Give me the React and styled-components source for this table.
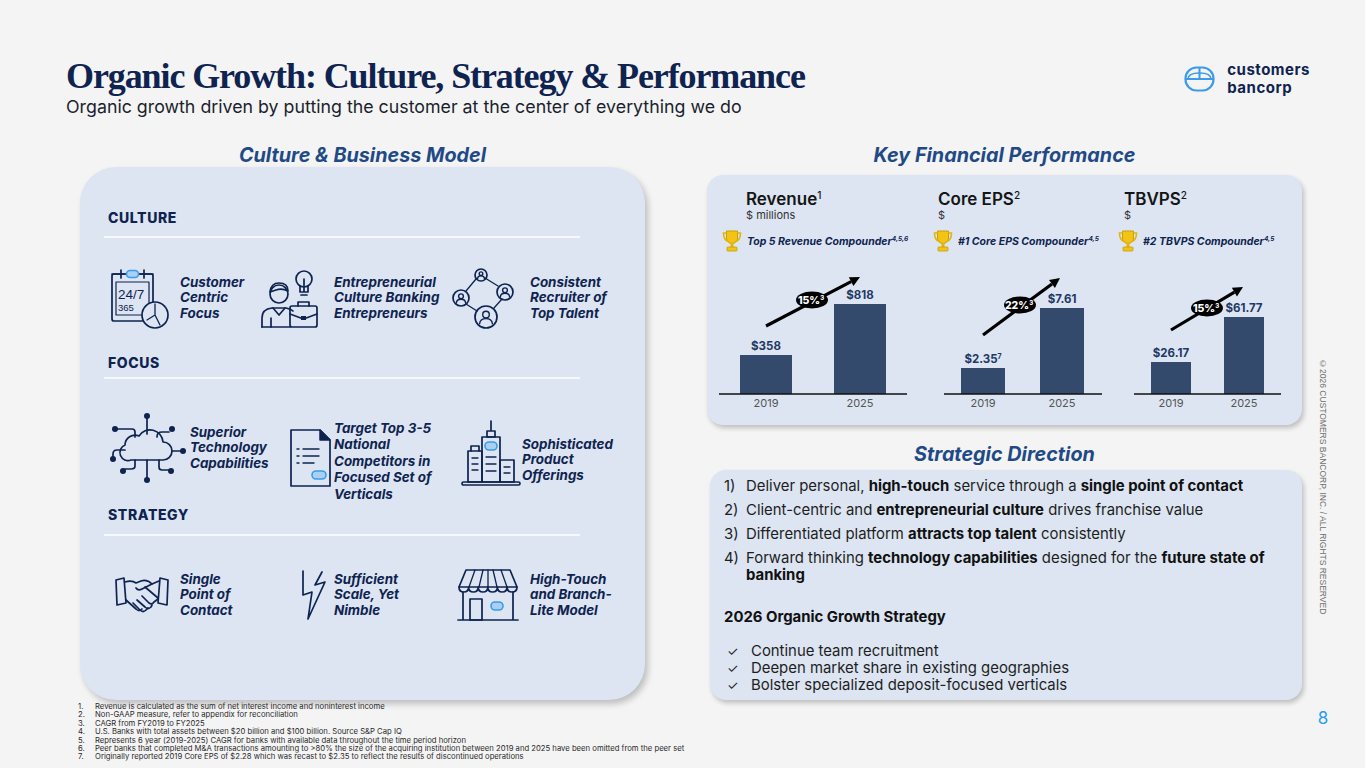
import styled, { createGlobalStyle } from 'styled-components'

const NAVY = '#0f2350'
const BLUE = '#3d9be9'
const BLUE_L = '#a9d0f2'
const PANEL = '#dce5f1'
const BAR = '#344a6c'
const SANS = 'Inter, "Noto Sans", "Liberation Sans", sans-serif'

const Global = createGlobalStyle`
    html, body {
        margin: 0;
        padding: 0;
        background: #f4f4f4;
    }
    body {
        font-family: ${SANS};
        color: #1e1e1e;
    }
`

const Page = styled.div`
    width: 1365px;
    height: 768px;
    overflow: hidden;
    background: #f4f4f4;
`

const Header = styled.header`
    display: flex;
    justify-content: space-between;
    align-items: flex-start;
    padding: 56px 55px 0 66px;
`

const Title = styled.h1`
    margin: 0;
    font-family: "Liberation Serif", "DejaVu Serif", serif;
    font-weight: 700;
    font-size: 36px;
    line-height: 40px;
    letter-spacing: -1.1px;
    color: ${NAVY};
`

const Subtitle = styled.p`
    margin: 0;
    font-size: 17.8px;
    line-height: 22px;
    color: #1b1f2e;
`

const Logo = styled.div`
    display: flex;
    align-items: center;
    gap: 12px;
    margin-top: 5px;
`

const LogoText = styled.div`
    font-size: 15px;
    font-weight: 700;
    line-height: 18px;
    color: ${NAVY};
    letter-spacing: 0.5px;
`

const Main = styled.main`
    display: grid;
    grid-template-columns: 565px 657px 42px;
    height: 623px;
    margin-top: 27px;
    padding-left: 80px;
`

const Column = styled.section`
    display: flex;
    flex-direction: column;
    padding-left: ${({ $pl }) => $pl || 0}px;
`

const SectionTitle = styled.h2`
    margin: ${({ $mt }) => $mt || 0}px 0 0;
    text-align: center;
    font-size: 19.8px;
    line-height: 20px;
    font-weight: 700;
    font-style: italic;
    color: #1f4a87;
`

const CulturePanel = styled.div`
    margin-top: 2px;
    height: 533px;
    box-sizing: border-box;
    padding: 43px 65px 0 24px;
    background: ${PANEL};
    border-radius: 36px;
    box-shadow: 3px 4px 6px rgba(0, 0, 0, 0.22);
`

const GroupLabel = styled.div`
    margin-top: ${({ $mt }) => $mt}px;
    padding-left: 4px;
    font-size: 14px;
    line-height: 16px;
    font-weight: 800;
    letter-spacing: 0.6px;
    color: ${NAVY};
`

const Divider = styled.div`
    margin-top: ${({ $mt }) => $mt}px;
    height: 2px;
    background: rgba(255, 255, 255, 0.75);
`

const IconRow = styled.div`
    display: grid;
    grid-template-columns: 154px 192px 1fr;
    grid-template-rows: ${({ $h }) => $h}px;
    align-items: center;
    margin-top: ${({ $mt }) => $mt}px;
`

// a top margin of 2n on a centred item moves it down by n
const Item = styled.div`
    display: flex;
    align-items: center;
    margin-top: ${({ $dy }) => ($dy || 0) * 2}px;
`

const IconBox = styled.div`
    flex: 0 0 ${({ $w }) => $w || 76}px;
    display: flex;
    align-items: center;
    padding-left: ${({ $ml }) => $ml || 0}px;
    margin-top: ${({ $up }) => -($up || 0) * 2}px;
    box-sizing: border-box;
`

const ItemText = styled.div`
    font-size: 13.4px;
    line-height: ${({ $lh }) => $lh || 15.5}px;
    font-weight: 700;
    font-style: italic;
    color: ${NAVY};
    white-space: nowrap;
`

const Footnotes = styled.ol`
    margin: 3px 0 0 -2px;
    padding: 0;
    list-style: none;
    counter-reset: fn;
`

const Footnote = styled.li`
    counter-increment: fn;
    display: flex;
    font-size: 7.7px;
    line-height: 8.4px;
    color: #2a2a2a;
    white-space: nowrap;

    &::before {
        content: counter(fn) ".";
        flex: 0 0 17px;
    }
`

const FinPanel = styled.div`
    margin-top: 10px;
    width: 595px;
    height: 250px;
    box-sizing: border-box;
    padding-top: 14px;
    display: grid;
    grid-template-columns: 218px 187px 1fr;
    background: ${PANEL};
    border-radius: 16px;
    box-shadow: 2px 3px 5px rgba(0, 0, 0, 0.22);
`

const Chart = styled.div`
    display: flex;
    flex-direction: column;
`

const ChartTitle = styled.div`
    padding-left: ${({ $pl }) => $pl}px;
    font-size: 17px;
    line-height: 20px;
    font-weight: 600;
    color: #151515;

    sup {
        font-size: 10px;
        font-weight: 500;
        vertical-align: 6px;
        line-height: 0;
    }
`

const ChartUnit = styled.div`
    padding-left: ${({ $pl }) => $pl}px;
    font-size: 11px;
    line-height: 13px;
    color: #333;
`

const Award = styled.div`
    display: flex;
    align-items: center;
    gap: 5px;
    height: 24px;
    margin-top: 7px;
    padding-left: ${({ $pl }) => $pl}px;
    font-size: 10.5px;
    font-weight: 700;
    font-style: italic;
    color: ${NAVY};
    white-space: nowrap;

    sup {
        font-size: 6.5px;
        vertical-align: 4px;
        line-height: 0;
    }
`

const Plot = styled.svg`
    display: block;
    margin-top: 12px;
`

const StratPanel = styled.div`
    margin-top: 6px;
    width: 592px;
    margin-left: 3px;
    height: 230px;
    box-sizing: border-box;
    padding: 8px 14px 0;
    background: ${PANEL};
    border-radius: 16px;
    box-shadow: 2px 3px 5px rgba(0, 0, 0, 0.22);
    font-size: 14.9px;
    line-height: 17px;
    color: #1e1e1e;

    b {
        font-weight: 700;
        color: #111;
    }
`

const Point = styled.div`
    display: flex;
    margin-top: ${({ $first }) => ($first ? 0 : 7)}px;
`

const PointNum = styled.span`
    flex: 0 0 22px;
`

const PointText = styled.div`
    flex: 1;
`

const StrategyHead = styled.div`
    margin-top: 25px;
    font-weight: 700;
    color: #111;
`

const Checks = styled.ul`
    margin: 17px 0 0;
    padding: 0;
    list-style: none;
`

const Check = styled.li`
    display: flex;

    &::before {
        content: "✓";
        flex: 0 0 27px;
        padding-left: 3px;
        box-sizing: border-box;
        font-size: 13px;
    }
`

const Side = styled.aside`
    display: flex;
    flex-direction: column;
    align-items: center;
    padding-top: 214px;
`

const Copyright = styled.div`
    writing-mode: vertical-rl;
    font-family: "Liberation Sans", Arial, sans-serif;
    font-size: 8.5px;
    color: #6f6f6f;
    white-space: nowrap;
`

const PageNum = styled.div`
    margin-top: auto;
    margin-bottom: 40px;
    font-size: 17px;
    line-height: 20px;
    color: #2b9de9;
`

/* ---------- drawings ---------- */

const stroke = { fill: 'none', stroke: NAVY, strokeWidth: 1.7, strokeLinecap: 'round', strokeLinejoin: 'round' }
const pill = { fill: BLUE_L, stroke: BLUE, strokeWidth: 1.6 }

const LogoMark = () => (
    <svg width="31" height="26" viewBox="0 0 31 26">
        <rect x="1.5" y="1.5" width="28" height="23" rx="11" fill="none" stroke={BLUE} strokeWidth="2.2" />
        <path d="M1.5 13 H29.5" stroke={BLUE} strokeWidth="2" />
        <path d="M15.5 1.5 V13" stroke={BLUE} strokeWidth="2" />
        <path d="M4 13 Q4 7 15.5 7 Q27 7 27 13" fill="none" stroke={BLUE} strokeWidth="1.6" />
    </svg>
)

const Person = ({ cx, cy, r }) => (
    <g {...stroke} strokeWidth="1.4">
        <circle cx={cx} cy={cy - r * 0.22} r={r * 0.3} />
        <path d={`M${cx - r * 0.58} ${cy + r * 0.62} Q${cx - r * 0.55} ${cy + r * 0.15} ${cx} ${cy + r * 0.15} Q${cx + r * 0.55} ${cy + r * 0.15} ${cx + r * 0.58} ${cy + r * 0.62}`} />
    </g>
)

const CalendarIcon = () => (
    <svg width="60" height="62" viewBox="0 0 60 62">
        <rect x="2" y="7" width="41" height="47" rx="2" {...stroke} />
        <rect x="6" y="15" width="33" height="33" {...stroke} strokeWidth="1.2" />
        <path d="M11 3 V11 M34 3 V11 M2 7 H43" {...stroke} />
        <rect x="16.5" y="3.5" width="12" height="7" rx="3.5" {...pill} />
        <text x="8" y="32" fontSize="13.5" fontFamily="Liberation Sans, sans-serif" fill={NAVY}>24/7</text>
        <text x="8" y="44" fontSize="9.5" fontFamily="Liberation Sans, sans-serif" fill={NAVY}>365</text>
        <circle cx="45" cy="48" r="13" fill={PANEL} stroke={NAVY} strokeWidth="1.7" />
        <path d="M45 48 V37 M45 48 L37 53 M45 48 L50 58" {...stroke} strokeWidth="1.3" />
    </svg>
)

const EntrepreneurIcon = () => (
    <svg width="62" height="60" viewBox="0 0 62 60">
        <circle cx="19" cy="26" r="9" {...stroke} />
        <path d="M10 24 Q11 15 19 15 Q28 15 28 23 Q22 20 16 22 Q13 23 10 24" {...stroke} />
        <path d="M2 59 V50 Q2 41 12 40 H26 Q31 41 33 43" {...stroke} />
        <path d="M13 40 L19 47 L25 40 M11 50 V59" {...stroke} />
        <path d="M2 59 H30" {...stroke} />
        <circle cx="44" cy="11" r="8" {...stroke} />
        <path d="M40 18 V24 H48 V18 M44 11 V24 M41 27 H47" {...stroke} />
        <rect x="30" y="38" width="27" height="21" rx="2" {...stroke} />
        <path d="M38 38 V34 H49 V38 M30 46 L43.5 51 L57 46" {...stroke} />
        <rect x="41" y="48" width="5" height="4" fill={NAVY} />
    </svg>
)

const NetworkIcon = () => (
    <svg width="62" height="62" viewBox="0 0 62 62">
        <path d="M24 12 L14 24 M33 11 L46 19 M14 37 L25 44 M50 32 L42 41" {...stroke} strokeWidth="1.3" />
        <circle cx="29" cy="8" r="6" {...stroke} />
        <circle cx="9" cy="31" r="8" {...stroke} />
        <circle cx="53" cy="25" r="8" {...stroke} />
        <circle cx="34" cy="50" r="11" {...stroke} />
        <Person cx={29} cy={8} r={6} />
        <Person cx={9} cy={31} r={8} />
        <Person cx={53} cy={25} r={8} />
        <Person cx={34} cy={50} r={11} />
    </svg>
)

const CloudIcon = () => (
    <svg width="80" height="76" viewBox="0 0 80 76">
        <path d="M24 50 H56 A9 9 0 0 0 56 32 A13 13 0 0 0 32 26 A10 10 0 0 0 18 35 A8 8 0 0 0 24 50 Z" {...stroke} />
        <g {...stroke}>
            <path d="M40 24 V7" />
            <path d="M28 27 V22 Q28 19 25 19 H10" />
            <path d="M50 27 Q50 22 55 22 H62" />
            <path d="M18 40 H10 Q6 40 6 44 V47" />
            <path d="M65 41 H74" />
            <path d="M40 50 V68" />
            <path d="M28 50 V56 Q28 59 24 59 H18" />
            <path d="M52 50 V57 Q52 60 55 60 H62" />
        </g>
        <g fill={NAVY}>
            <circle cx="40" cy="6" r="3" />
            <circle cx="8" cy="19" r="3" />
            <circle cx="65" cy="19" r="3" />
            <circle cx="6" cy="49" r="3" />
            <circle cx="76" cy="41" r="3" />
            <circle cx="40" cy="70" r="3" />
            <circle cx="16" cy="61" r="3" />
            <circle cx="64" cy="61" r="3" />
        </g>
    </svg>
)

const DocumentIcon = () => (
    <svg width="44" height="60" viewBox="0 0 44 60">
        <path d="M3 2 H32 L42 12 V58 H3 Z" {...stroke} />
        <path d="M32 2 L42 12 H32 Z" fill={NAVY} stroke={NAVY} strokeWidth="1.5" strokeLinejoin="round" />
        <path d="M9 21 H11 M15 21 H31 M9 28 H11 M15 28 H31 M9 35 H11 M15 35 H26" {...stroke} strokeWidth="1.4" />
        <rect x="24" y="43" width="14" height="8" rx="4" {...pill} />
    </svg>
)

const BuildingIcon = () => (
    <svg width="62" height="66" viewBox="0 0 62 66">
        <path d="M31 1 V11 M27 11 H35 V17 H27 Z" {...stroke} />
        <rect x="22" y="17" width="18" height="45" {...stroke} />
        <rect x="8" y="31" width="14" height="31" {...stroke} />
        <path d="M11 31 V26 H19 V31" {...stroke} />
        <rect x="40" y="40" width="14" height="22" {...stroke} />
        <rect x="2" y="62" width="58" height="3" rx="1.5" {...stroke} />
        <rect x="25" y="22" width="12" height="8" rx="4" {...pill} />
        <path d="M12 38 H18 M12 44 H18 M12 50 H18 M26 37 H36 M26 44 H36 M26 51 H36 M44 47 H50 M44 53 H50" {...stroke} strokeWidth="1.3" />
    </svg>
)

const HandshakeIcon = () => (
    <svg width="56" height="44" viewBox="0 0 56 44">
        <path d="M2 7 L10 5 L12 30 L3 32 Z" {...stroke} />
        <path d="M46 5 L54 7 L53 32 L44 30 Z" {...stroke} />
        <path d="M11 9 Q18 7 22 10 L27 8 Q33 6 38 11 L45 8" {...stroke} />
        <path d="M38 11 L28 16 Q24 18 22 15" {...stroke} />
        <path d="M12 27 L22 36 Q25 39 28 36" {...stroke} />
        <path d="M19 30 L26 37 Q29 40 32 37 L34 35" {...stroke} />
        <path d="M23 27 L31 34 Q34 37 37 34 L38 32" {...stroke} />
        <path d="M28 23 L35 30 Q38 32 40 29 L44 26" {...stroke} />
        <path d="M31 14 L44 25" {...stroke} />
    </svg>
)

const BoltIcon = () => (
    <svg width="28" height="52" viewBox="0 0 28 52">
        <path d="M3 2 L3 26 L12 23 L8 50 L25 13 L15 16 L22 3" {...stroke} />
    </svg>
)

const StoreIcon = () => (
    <svg width="62" height="56" viewBox="0 0 62 56">
        <path d="M9 3 H53 L60 20 H2 Z" {...stroke} />
        <path d="M2 20 Q2 25 6.8 25 Q11.6 25 11.6 20 Q11.6 25 16.4 25 Q21.2 25 21.2 20 Q21.2 25 26 25 Q30.8 25 30.8 20 Q30.8 25 35.6 25 Q40.4 25 40.4 20 Q40.4 25 45.2 25 Q50 25 50 20 Q50 25 55 25 Q60 25 60 20" {...stroke} />
        <path d="M18 3 L12 20 M26 3 L22 20 M31 3 V20 M36 3 L40 20 M44 3 L50 20" {...stroke} strokeWidth="1.3" />
        <path d="M6 25 V53 M56 25 V53 M1 53 H61" {...stroke} />
        <rect x="13" y="32" width="12" height="21" {...stroke} />
        <rect x="34" y="35" width="12" height="8" rx="4" {...pill} />
    </svg>
)

const Trophy = () => (
    <svg width="20" height="24" viewBox="0 0 20 24">
        <path d="M4.5 2 H15.5 V9 A5.5 5.5 0 0 1 4.5 9 Z" fill="#f3c414" stroke="#c99d05" strokeWidth="1" />
        <path d="M4.5 4 H1.5 Q1.5 11 6 12.5 M15.5 4 H18.5 Q18.5 11 14 12.5" fill="none" stroke="#e2b40c" strokeWidth="1.6" />
        <rect x="8.5" y="14" width="3" height="4" fill="#e2b40c" />
        <rect x="5" y="18" width="10" height="4" rx="0.8" fill="#f3c414" stroke="#c99d05" strokeWidth="0.8" />
    </svg>
)

/* ---------- data ---------- */

// dy moves a whole item down, up pulls its icon back up (px)
const rows = [
    {
        label: 'CULTURE', labelTop: 0, divTop: 10, rowTop: 30, h: 60,
        items: [
            { icon: <CalendarIcon />, ml: 6, text: ['Customer', 'Centric', 'Focus'] },
            { icon: <EntrepreneurIcon />, ml: 2, text: ['Entrepreneurial', 'Culture Banking', 'Entrepreneurs'] },
            { icon: <NetworkIcon />, ml: 2, w: 80, text: ['Consistent', 'Recruiter of', 'Top Talent'] },
        ],
    },
    {
        label: 'FOCUS', labelTop: 27, divTop: 6, rowTop: 31, h: 76,
        items: [
            { icon: <CloudIcon />, ml: 3, w: 86, text: ['Superior', 'Technology', 'Capabilities'] },
            { icon: <DocumentIcon />, ml: 30, dy: 13, up: 3, lh: 16.5, text: ['Target Top 3-5', 'National', 'Competitors in', 'Focused Set of', 'Verticals'] },
            { icon: <BuildingIcon />, ml: 10, w: 72, dy: 12, up: 7, text: ['Sophisticated', 'Product', 'Offerings'] },
        ],
    },
    {
        label: 'STRATEGY', labelTop: 21, divTop: 11, rowTop: 28, h: 62,
        items: [
            { icon: <HandshakeIcon />, ml: 10, text: ['Single', 'Point of', 'Contact'] },
            { icon: <BoltIcon />, ml: 42, text: ['Sufficient', 'Scale, Yet', 'Nimble'] },
            { icon: <StoreIcon />, ml: 7, w: 80, text: ['High-Touch', 'and Branch-', 'Lite Model'] },
        ],
    },
]

const charts = [
    {
        title: 'Revenue', sup: '1', unit: '$ millions', award: 'Top 5 Revenue Compounder', awardSup: '4,5,6',
        titlePad: 39, trophyPad: 15, width: 218, axis: [12, 200],
        bars: [
            { x: 33, w: 52, h: 39, label: '$358', year: '2019' },
            { x: 127, w: 52, h: 90, label: '$818', year: '2025' },
        ],
        arrow: [59, 61, 153, 12], pill: [105, 35, '15%'],
    },
    {
        title: 'Core EPS', sup: '2', unit: '$', award: '#1 Core EPS Compounder', awardSup: '4,5',
        titlePad: 13, trophyPad: 8, width: 187, axis: [19, 177],
        bars: [
            { x: 36, w: 44, h: 26, label: '$2.35', labelSup: '7', year: '2019' },
            { x: 115, w: 44, h: 86, label: '$7.61', year: '2025' },
        ],
        arrow: [58, 70, 135, 13], pill: [95, 40, '22%'],
    },
    {
        title: 'TBVPS', sup: '2', unit: '$', award: '#2 TBVPS Compounder', awardSup: '4,5',
        titlePad: 12, trophyPad: 6, width: 190, axis: [22, 169],
        bars: [
            { x: 39, w: 40, h: 32, label: '$26.17', year: '2019' },
            { x: 112, w: 40, h: 77, label: '$61.77', year: '2025' },
        ],
        arrow: [59, 65, 131, 22], pill: [95, 43, '15%'],
    },
]

const footnotes = [
    'Revenue is calculated as the sum of net interest income and noninterest income',
    'Non-GAAP measure, refer to appendix for reconciliation',
    'CAGR from FY2019 to FY2025',
    'U.S. Banks with total assets between $20 billion and $100 billion. Source S&P Cap IQ',
    'Represents 6 year (2019-2025) CAGR for banks with available data throughout the time period horizon',
    'Peer banks that completed M&A transactions amounting to >80% the size of the acquiring institution between 2019 and 2025 have been omitted from the peer set',
    'Originally reported 2019 Core EPS of $2.28 which was recast to $2.35 to reflect the results of discontinued operations',
]

/* ---------- parts ---------- */

const BASE = 129

const Arrow = ({ line }) => {
    const [x1, y1, x2, y2] = line
    const len = Math.hypot(x2 - x1, y2 - y1)
    const ux = (x2 - x1) / len
    const uy = (y2 - y1) / len
    const bx = x2 - ux * 10
    const by = y2 - uy * 10
    const head = `${x2},${y2} ${bx - uy * 5},${by + ux * 5} ${bx + uy * 5},${by - ux * 5}`
    return (
        <g>
            <line x1={x1} y1={y1} x2={bx} y2={by} stroke="#000" strokeWidth="3.2" />
            <polygon points={head} fill="#000" />
        </g>
    )
}

const ChartBlock = ({ c }) => (
    <Chart>
        <ChartTitle $pl={c.titlePad}>{c.title}<sup>{c.sup}</sup></ChartTitle>
        <ChartUnit $pl={c.titlePad}>{c.unit}</ChartUnit>
        <Award $pl={c.trophyPad}>
            <Trophy />
            <span>{c.award}<sup>{c.awardSup}</sup></span>
        </Award>
        <Plot width={c.width} height="150" viewBox={`0 0 ${c.width} 150`} fontFamily={SANS}>
            {c.bars.map((b) => (
                <g key={b.year}>
                    <rect x={b.x} y={BASE - b.h} width={b.w} height={b.h} fill={BAR} />
                    <text x={b.x + b.w / 2} y={BASE - b.h - 5} textAnchor="middle" fontSize="11.5" fontWeight="700" fill="#1f3966">
                        {b.label}
                        {b.labelSup && <tspan fontSize="7" dy="-4">{b.labelSup}</tspan>}
                    </text>
                    <text x={b.x + b.w / 2} y={BASE + 13} textAnchor="middle" fontSize="11" fill="#555">{b.year}</text>
                </g>
            ))}
            <line x1={c.axis[0]} y1={BASE} x2={c.axis[1]} y2={BASE} stroke="#111" strokeWidth="1.4" />
            <Arrow line={c.arrow} />
            <ellipse cx={c.pill[0]} cy={c.pill[1]} rx="16" ry="8.5" fill="#000" />
            <text x={c.pill[0] - 1} y={c.pill[1] + 3.8} textAnchor="middle" fontSize="10.5" fontWeight="800" fill="#fff">
                {c.pill[2]}<tspan fontSize="6" dy="-4">3</tspan>
            </text>
        </Plot>
    </Chart>
)

const App = () => {
    return (
        <Page>
            <Global />
            <Header>
                <div>
                    <Title>Organic Growth: Culture, Strategy &amp; Performance</Title>
                    <Subtitle>Organic growth driven by putting the customer at the center of everything we do</Subtitle>
                </div>
                <Logo>
                    <LogoMark />
                    <LogoText>
                        <div>customers</div>
                        <div>bancorp</div>
                    </LogoText>
                </Logo>
            </Header>

            <Main>
                <Column>
                    <SectionTitle>Culture &amp; Business Model</SectionTitle>
                    <CulturePanel>
                        {rows.map((r) => (
                            <div key={r.label}>
                                <GroupLabel $mt={r.labelTop}>{r.label}</GroupLabel>
                                <Divider $mt={r.divTop} />
                                <IconRow $mt={r.rowTop} $h={r.h}>
                                    {r.items.map((it) => (
                                        <Item key={it.text.join(' ')} $dy={it.dy}>
                                            <IconBox $ml={it.ml} $w={it.w} $up={it.up}>{it.icon}</IconBox>
                                            <ItemText $lh={it.lh}>
                                                {it.text.map((t) => <div key={t}>{t}</div>)}
                                            </ItemText>
                                        </Item>
                                    ))}
                                </IconRow>
                            </div>
                        ))}
                    </CulturePanel>
                    <Footnotes>
                        {footnotes.map((f) => <Footnote key={f}>{f}</Footnote>)}
                    </Footnotes>
                </Column>

                <Column $pl={62}>
                    <SectionTitle>Key Financial Performance</SectionTitle>
                    <FinPanel>
                        {charts.map((c) => <ChartBlock key={c.title} c={c} />)}
                    </FinPanel>
                    <SectionTitle $mt={19}>Strategic Direction</SectionTitle>
                    <StratPanel>
                        <Point $first><PointNum>1)</PointNum><PointText>Deliver personal, <b>high-touch</b> service through a <b>single point of contact</b></PointText></Point>
                        <Point><PointNum>2)</PointNum><PointText>Client-centric and <b>entrepreneurial culture</b> drives franchise value</PointText></Point>
                        <Point><PointNum>3)</PointNum><PointText>Differentiated platform <b>attracts top talent</b> consistently</PointText></Point>
                        <Point><PointNum>4)</PointNum><PointText>Forward thinking <b>technology capabilities</b> designed for the <b>future state of</b><br /><b>banking</b></PointText></Point>
                        <StrategyHead>2026 Organic Growth Strategy</StrategyHead>
                        <Checks>
                            <Check>Continue team recruitment</Check>
                            <Check>Deepen market share in existing geographies</Check>
                            <Check>Bolster specialized deposit-focused verticals</Check>
                        </Checks>
                    </StratPanel>
                </Column>

                <Side>
                    <Copyright>©2026 CUSTOMERS BANCORP, INC. / ALL RIGHTS RESERVED</Copyright>
                    <PageNum>8</PageNum>
                </Side>
            </Main>
        </Page>
    )
}

export default App
